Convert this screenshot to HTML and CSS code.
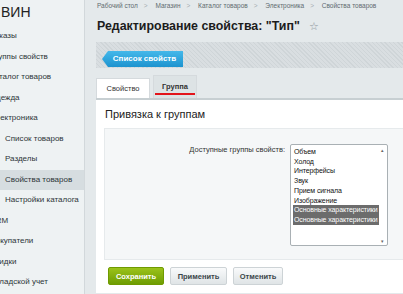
FILE: index.html
```html
<!DOCTYPE html>
<html lang="ru">
<head>
    <meta charset="UTF-8">
    <title>Редактирование свойства</title>
    <link rel="stylesheet" href="styles.css">
</head>
<body>
    <div class="sidebar">
        <div class="side-title">ВИН</div>
        <ul class="menu">
            <li>Заказы</li>
            <li>Группы свойств</li>
            <li>Каталог товаров</li>
            <li>Одежда</li>
            <li>Электроника</li>
            <li class="sub">Список товаров</li>
            <li class="sub">Разделы</li>
            <li class="sub active">Свойства товаров</li>
            <li class="sub">Настройки каталога</li>
            <li>CRM</li>
            <li>Покупатели</li>
            <li>Скидки</li>
            <li>Складской учет</li>
        </ul>
    </div>
    <div class="main">
        <div class="crumbs">
            <span>Рабочий стол</span><span class="sep">&gt;</span>
            <span>Магазин</span><span class="sep">&gt;</span>
            <span>Каталог товаров</span><span class="sep">&gt;</span>
            <span>Электроника</span><span class="sep">&gt;</span>
            <span>Свойства товаров</span>
        </div>
        <h1 class="title">Редактирование свойства: "Тип" <span class="star">&#9734;</span></h1>
        <div class="toolbar">
            <a href="#" class="back-btn">Список свойств</a>
        </div>
        <div class="tabs">
            <div class="tab">Свойство</div>
            <div class="tab current">Группа</div>
        </div>
        <div class="panel">
            <div class="panel-title">Привязка к группам</div>
            <div class="form-box">
                <div class="field-label">Доступные группы свойств:</div>
                <div class="listbox">
                    <div class="options">
                        <div>Объем</div>
                        <div>Холод</div>
                        <div>Интерфейсы</div>
                        <div>Звук</div>
                        <div>Прием сигнала</div>
                        <div>Изображение</div>
                        <div class="selected">Основные характеристики</div>
                        <div class="selected">Основные характеристики</div>
                    </div>
                    <div class="scroll">
                        <span class="arrow">&#9652;</span>
                        <span class="arrow">&#9662;</span>
                    </div>
                </div>
            </div>
            <div class="buttons">
                <button class="btn save">Сохранить</button>
                <button class="btn">Применить</button>
                <button class="btn">Отменить</button>
            </div>
        </div>
    </div>
</body>
</html>
```

FILE: styles.css
```css
body {
    margin: 0;
    height: 294px;
    overflow: hidden;
    display: flex;
    font-family: "Liberation Sans", Arial, sans-serif;
    background-color: #e4e9eb;
    color: #222;
}

/* left menu */
.sidebar {
    width: 84px;
    flex-shrink: 0;
    background-color: #eef2f3;
    border-right: 1px solid #d2d8db;
    overflow: hidden;
}

.side-title {
    height: 26px;
    line-height: 24px;
    font-size: 14px;
    color: #222;
    padding-left: 1px;
}

.menu {
    list-style: none;
    margin: 0;
    padding: 0;
}

.menu li {
    height: 20.5px;
    line-height: 20.5px;
    font-size: 8px;
    color: #2d3538;
    white-space: nowrap;
    margin-left: -10px;
}

.menu li.sub {
    margin-left: 0;
    padding-left: 5px;
}

.menu li.active {
    background-color: #d6dde0;
}

/* main column */
.main {
    flex: 1;
    padding-left: 11px;
    min-width: 0;
}

.crumbs {
    height: 12px;
    line-height: 12px;
    padding-left: 1px;
    font-size: 6.5px;
    color: #5f6b70;
    white-space: nowrap;
}

.crumbs .sep {
    color: #a4adb1;
    margin: 0 6px;
}

.title {
    margin: 0;
    height: 28px;
    line-height: 28px;
    padding-left: 1px;
    font-size: 12.4px;
    font-weight: bold;
    color: #1c1c1c;
    white-space: nowrap;
}

.title .star {
    font-weight: normal;
    font-size: 11px;
    color: #8d979b;
    margin-left: 6px;
}

.toolbar {
    margin-top: 2px;
    height: 26px;
    background: repeating-linear-gradient(45deg, #cfd5d8 0 1px, #d9dee1 1px 3px);
    padding: 5px 0 0 6px;
    box-sizing: border-box;
}

.back-btn {
    display: inline-block;
    width: 81px;
    height: 16px;
    line-height: 16px;
    padding-left: 4px;
    box-sizing: border-box;
    text-align: center;
    font-size: 8px;
    font-weight: bold;
    color: #fff;
    text-decoration: none;
    background: linear-gradient(#44b8ea, #1d93cf);
    clip-path: polygon(6px 0, 100% 0, 100% 100%, 6px 100%, 0 50%);
}

/* tabs */
.tabs {
    margin-top: 6px;
    height: 24px;
    display: flex;
    align-items: flex-end;
    gap: 3px;
}

.tab {
    width: 54px;
    height: 20px;
    line-height: 20px;
    text-align: center;
    font-size: 7.5px;
    color: #333;
    background-color: #fff;
    border: 1px solid #d5dadd;
    border-bottom: none;
    box-sizing: border-box;
}

.tab.current {
    width: 44px;
    height: 23px;
    line-height: 21px;
    font-weight: bold;
    background-color: #dde3e5;
    position: relative;
}

.tab.current::after {
    content: "";
    position: absolute;
    left: 1px;
    right: 1px;
    bottom: 3px;
    height: 2px;
    background-color: #e3141b;
}

/* panel */
.panel {
    background-color: #fff;
    border-top: 2px solid #c7cfd2;
    height: 195px;
    box-sizing: border-box;
}

.panel-title {
    height: 28px;
    line-height: 28px;
    padding-left: 9px;
    font-size: 11px;
    color: #222;
}

.form-box {
    margin-left: 8px;
    height: 132px;
    background-color: #f5f7f8;
    border: 1px solid #e6eaec;
    border-right: none;
    box-sizing: border-box;
    display: grid;
    grid-template-columns: 180px 98px;
    column-gap: 5px;
    padding-top: 15px;
    align-items: start;
}

.field-label {
    text-align: right;
    font-size: 7.5px;
    line-height: 9px;
    color: #333;
    padding-top: 1px;
}

.listbox {
    height: 102px;
    background-color: #fff;
    border: 1px solid #a9b0b4;
    border-radius: 2px;
    box-sizing: border-box;
    display: flex;
    padding: 2px 1px 1px 2px;
}

.options {
    flex: 1;
    font-size: 7px;
    letter-spacing: -0.1px;
    line-height: 9.7px;
    color: #111;
    white-space: nowrap;
    overflow: hidden;
}

.options div {
    padding-left: 1px;
}

.options .selected {
    background-color: #6c6c6c;
    color: #fff;
}

.scroll {
    width: 7px;
    display: flex;
    flex-direction: column;
    justify-content: space-between;
    align-items: center;
    font-size: 5px;
    color: #666;
}

.buttons {
    display: flex;
    gap: 6px;
    padding: 7px 0 0 12px;
}

.btn {
    height: 18px;
    padding: 0;
    font-family: "Liberation Sans", Arial, sans-serif;
    font-size: 7.5px;
    font-weight: bold;
    color: #3b4549;
    border: 1px solid #cdd3d6;
    border-radius: 2px;
    background: linear-gradient(#f9fafb, #dfe4e6);
    width: 57px;
}

.btn:last-child {
    width: 50px;
}

.btn.save {
    width: 56px;
    color: #fff;
    border-color: #6f9a00;
    background: linear-gradient(#9bc21a, #6e9d02);
}
```
